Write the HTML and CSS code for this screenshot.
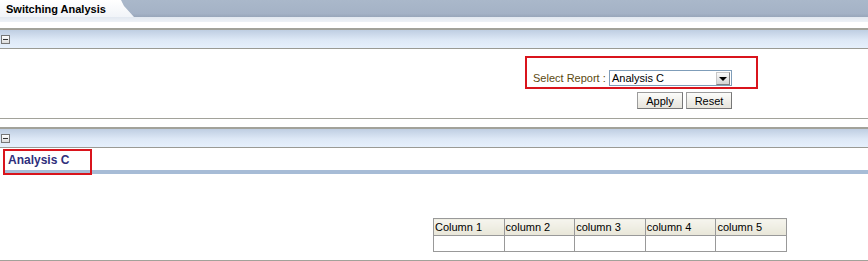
FILE: index.html
```html
<!DOCTYPE html>
<html lang="en">
<head>
    <meta charset="UTF-8">
    <title>Switching Analysis</title>
    <link rel="stylesheet" href="styles.css">
</head>
<body>
    <div class="tabbar">
        <div class="tab">Switching Analysis</div>
    </div>
    <div class="tabstrip"></div>

    <div class="panel-header"><span class="toggle"></span></div>
    <div class="panel-body filter-body">
        <div class="filter">
            <div class="filter-box">
                <label class="filter-label">Select Report :</label>
                <div class="select">
                    <span class="select-value">Analysis C</span>
                    <span class="select-arrow"></span>
                </div>
            </div>
            <div class="buttons">
                <button class="btn">Apply</button>
                <button class="btn">Reset</button>
            </div>
        </div>
    </div>

    <div class="gap"></div>

    <div class="panel-header"><span class="toggle"></span></div>
    <div class="panel-body result-body">
        <div class="result-title">
            <span class="title-box">Analysis C</span>
        </div>
        <div class="grid-wrap">
            <table class="grid">
                <tr>
                    <th>Column 1</th>
                    <th>column 2</th>
                    <th>column 3</th>
                    <th>column 4</th>
                    <th>column 5</th>
                </tr>
                <tr>
                    <td></td><td></td><td></td><td></td><td></td>
                </tr>
            </table>
        </div>
    </div>
</body>
</html>
```

FILE: styles.css
```css
body {
    margin: 0;
    font-family: Tahoma, "Liberation Sans", Arial, sans-serif;
    font-size: 11px;
    background: #fff;
    color: #000;
}

.tabbar {
    height: 17px;
    background: linear-gradient(#aab8ca, #a4b2c6 80%, #98a6ba);
}

.tab {
    width: 134px;
    height: 17px;
    box-sizing: border-box;
    padding: 3px 0 0 6px;
    font-weight: bold;
    font-size: 11px;
    color: #000;
    background: linear-gradient(#ffffff, #f1f4f8);
    clip-path: polygon(0 0, 121px 0, 124px 6px, 134px 17px, 0 17px);
}

.tabstrip {
    height: 5px;
    background: linear-gradient(#e2e8f0, #eef2f7);
    margin-bottom: 6px;
}

.panel-header {
    height: 18px;
    border-top: 2px solid #a2a29a;
    border-bottom: 1px solid #9a9a94;
    background: linear-gradient(#bfcee2, #dde8f6 55%, #e6f0fc);
    display: flex;
    align-items: center;
}

.toggle {
    width: 7px;
    height: 7px;
    margin-left: 1px;
    border: 1px solid #777;
    background: linear-gradient(#fff, #dcdcdc);
    position: relative;
}

.toggle::after {
    content: "";
    position: absolute;
    left: 1px;
    right: 1px;
    top: 3px;
    height: 1px;
    background: #333;
}

.filter-body {
    height: 69px;
    border-bottom: 1px solid #a2a29a;
}

.filter {
    margin-left: 525px;
    padding-top: 7px;
    width: 233px;
}

.filter-box {
    height: 28px;
    border: 2px solid #d9141c;
    display: flex;
    align-items: flex-end;
    padding-bottom: 1px;
}

.filter-label {
    color: #5c4a10;
    margin-left: 6px;
    margin-bottom: 2px;
    width: 76px;
}

.select {
    width: 123px;
    height: 16px;
    box-sizing: border-box;
    border: 1px solid #7f9db9;
    display: flex;
    align-items: center;
    justify-content: space-between;
    background: #fff;
}

.select-value {
    padding-left: 2px;
    font-size: 11px;
}

.select-arrow {
    width: 14px;
    height: 13px;
    margin-right: 1px;
    border: 1px solid #808080;
    border-top-color: #c8c8c8;
    border-left-color: #c8c8c8;
    background: linear-gradient(#fafafa, #d4d4d4);
    box-sizing: border-box;
    position: relative;
}

.select-arrow::after {
    content: "";
    position: absolute;
    left: 2px;
    top: 4px;
    border-left: 4px solid transparent;
    border-right: 4px solid transparent;
    border-top: 4px solid #000;
}

.buttons {
    display: flex;
    gap: 3px;
    margin-top: 3px;
    margin-left: 112px;
}

.btn {
    height: 17px;
    width: 46px;
    padding: 0;
    font-family: inherit;
    font-size: 11px;
    color: #000;
    border: 1px solid #9c9c9c;
    border-right-color: #777;
    border-bottom-color: #777;
    background: linear-gradient(#fcfcfa, #e6e4dc);
    border-radius: 0;
}

.gap {
    height: 8px;
}

.result-body {
    height: 111px;
    border-bottom: 1px solid #a2a29a;
}

.result-title {
    margin: 1px 0 0 3px;
    height: 21px;
    position: relative;
    border-bottom: 4px solid #a7bcd6;
}

.title-box {
    position: absolute;
    left: 0;
    top: 0;
    width: 89px;
    height: 26px;
    border: 2px solid #d9141c;
    padding-left: 3px;
    box-sizing: border-box;
    font-size: 12px;
    font-weight: bold;
    color: #2f2f7c;
    line-height: 19px;
}

.grid-wrap {
    padding: 44px 0 0 433px;
}

.grid {
    border-collapse: collapse;
    border: 1px solid #999;
    table-layout: fixed;
    width: 354px;
}

.grid th,
.grid td {
    border: 1px solid #999;
    height: 15px;
    padding: 0 0 0 1px;
    text-align: left;
    font-weight: normal;
    font-size: 11px;
}

.grid th {
    height: 16px;
    background: linear-gradient(#f6f5ee, #e8e6d8);
}
```
